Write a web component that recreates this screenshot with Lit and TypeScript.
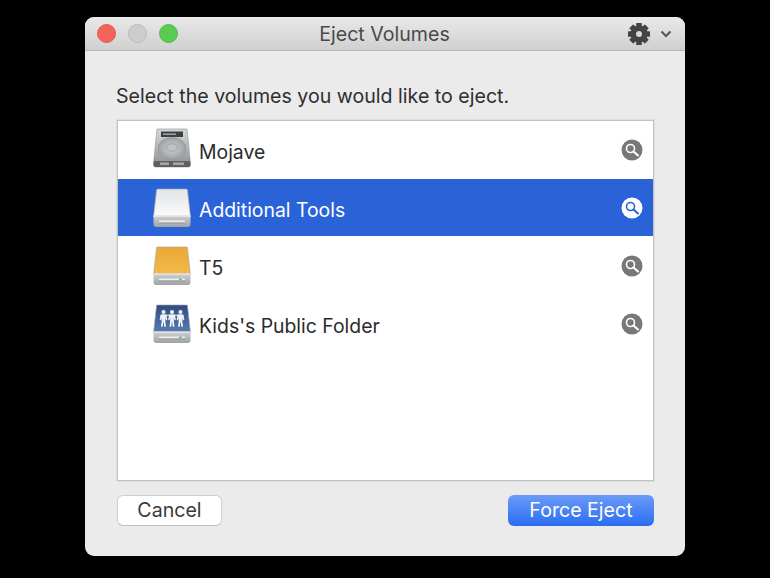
import { LitElement, html, css, svg } from "lit";
import { customElement } from "lit/decorators.js";

const defs = svg`<defs>
  <linearGradient id="hdd" x1="0" y1="0" x2="0" y2="1"><stop offset="0" stop-color="#d6d9da"/><stop offset=".55" stop-color="#aeb2b3"/><stop offset="1" stop-color="#8b8f91"/></linearGradient>
  <linearGradient id="body" x1="0" y1="0" x2="0" y2="1"><stop offset="0" stop-color="#cfd1d2"/><stop offset="1" stop-color="#a0a3a5"/></linearGradient>
  <linearGradient id="white" x1="0" y1="0" x2="0" y2="1"><stop offset="0" stop-color="#e2e4e6"/><stop offset="1" stop-color="#fbfbfc"/></linearGradient>
  <linearGradient id="orange" x1="0" y1="0" x2="0" y2="1"><stop offset="0" stop-color="#e9a835"/><stop offset="1" stop-color="#f2bb4c"/></linearGradient>
  <linearGradient id="blue" x1="0" y1="0" x2="0" y2="1"><stop offset="0" stop-color="#2f4b80"/><stop offset="1" stop-color="#5b7bb0"/></linearGradient>
  <radialGradient id="platter"><stop offset="0" stop-color="#cfd2d3"/><stop offset="1" stop-color="#9da1a3"/></radialGradient>
</defs>`;

const hdd = html`<svg class="disk hdd" viewBox="0 0 38 40">
  <path d="M4 1h30l3.500 35q0 3-2 3H2.500q-2 0-2-3z" fill="url(#hdd)" stroke="#8b8f91" stroke-width=".6"/>
  <rect x="8" y="3.500" width="22" height="5.500" fill="#3e4042"/>
  <rect x="10" y="5.500" width="13" height="1.400" fill="#a9adaf"/>
  <ellipse cx="19" cy="20.500" rx="14" ry="11" fill="url(#platter)" stroke="#8d9193" stroke-width=".5"/>
  <ellipse cx="19" cy="19.500" rx="5.500" ry="3.800" fill="#bfc2c3" stroke="#8a8e90" stroke-width=".6"/>
  <path d="M1 33h36l.5 3q0 3-2 3H2.500q-2 0-2-3z" fill="#5e6163"/>
  <rect x="7" y="34.500" width="9" height="2.500" fill="#a5a8aa"/>
  <rect x="20" y="34.500" width="11" height="2.500" fill="#a5a8aa"/>
</svg>`;

const external = (fill: string, extra: unknown = "") => html`<svg class="disk" viewBox="0 0 38 40">
  <path d="M4.500 1h29q1 0 1 1l3 27H.5l3-27q0-1 1-1z" fill="url(#${fill})" stroke="#a3a6a8" stroke-width=".6"/>
  ${extra}
  <path d="M.5 27.500h37V36q0 3-3 3H3.500q-3 0-3-3z" fill="url(#body)"/>
  <path d="M.5 27.500h37v1.200H.5z" fill="#e6e7e8"/>
  <rect x="6" y="32.500" width="26" height="2.200" rx="1" fill="#eef0f0"/>
  <rect x="6" y="34.500" width="26" height=".8" fill="#85888a"/>
  ${fill === "white" ? "" : svg`<rect x="26" y="32.500" width="3" height="2" fill="#7fb98a"/>`}
</svg>`;

const person = (x: number) => svg`<g fill="#f2f4f8">
  <circle cx="${x}" cy="8" r="2"/>
  <path d="M${x - 3} 10.500h6l.8 5.500-1.400.3-.6-3v3.500l.7 6h-1.700l-.8-5.500-.8 5.500h-1.700l.7-6v-3.500l-.6 3-1.400-.3z"/>
</g>`;
const people = svg`${person(10.500)}${person(19)}${person(27.500)}
  <rect x="9" y="10.700" width="20" height="1" fill="#f2f4f8"/>`;

const rows = [
  { name: "Mojave", icon: hdd },
  { name: "Additional Tools", icon: external("white"), selected: true },
  { name: "T5", icon: external("orange") },
  { name: "Kids's Public Folder", icon: external("blue", people) },
];

const gearTeeth = [0, 45, 90, 135];

@customElement("app-root")
export class AppRoot extends LitElement {
  static styles = css`
    :host { display: block; width: 770px; height: 578px; background: #000; overflow: hidden; padding: 17px 85px 22px; box-sizing: border-box; font-family: Inter, "Liberation Sans", sans-serif; }
    .window { height: 539px; width: 600px; background: #ebebeb; border-radius: 9px; display: flex; flex-direction: column; overflow: hidden; }
    .titlebar { height: 33px; flex: none; display: grid; grid-template-columns: 1fr auto 1fr; align-items: center; background: linear-gradient(#e9e9e9, #d0d0d0); border-bottom: 1px solid #b4b4b4; padding: 0 13px 0 12px; }
    .lights { display: flex; gap: 11.750px; }
    .light { width: 19px; height: 19px; border-radius: 50%; box-sizing: border-box; }
    .red { background: #f5645c; border: 1px solid #e4574f; }
    .gray { background: #cdcdcd; border: 1px solid #bbb; }
    .green { background: #5acb52; border: 1px solid #50bc49; }
    .title { font-size: 19.600px; color: #4a4a4a; padding-top: 1px; }
    .tools { display: flex; justify-content: flex-end; align-items: center; gap: 9px; }
    .gear { width: 24px; height: 24px; display: block; }
    .chev { width: 12px; height: 8px; display: block; }
    .content { flex: 1; display: flex; flex-direction: column; padding: 33px 31px 30px 32px; }
    .prompt { font-size: 19.600px; line-height: 24px; color: #2e2e2e; margin-bottom: 12px; margin-left: -1px; }
    .list { height: 361px; box-sizing: border-box; border: 1px solid #c2c2c2; box-shadow: 0 0 0 1px #dedede; background: #fff; margin-bottom: 14px; display: flex; flex-direction: column; }
    .row { height: 58px; flex: none; display: flex; align-items: center; padding-left: 35px; padding-right: 10px; color: #2b2b2b; font-size: 19.400px; }
    .row.sel { background: linear-gradient(#2a63d8, #2a63d8) no-repeat top / 100% 57px; color: #fff; }
    .disk { width: 38px; height: 40px; flex: none; margin-right: 8px; display: block; }
    .hdd { margin-top: -4px; }
    .name { flex: 1; padding-top: 3px; }
    .mag { width: 22px; height: 22px; display: block; }
    .actions { display: flex; justify-content: space-between; }
    button { font: inherit; font-size: 19.600px; height: 31px; padding: 1px 0 0; border-radius: 6px; line-height: 1; }
    .cancel { width: 105px; background: #fff; color: #3a3a3a; border: 1px solid #cfcfcf; border-bottom-color: #bdbdbd; }
    .force { width: 146px; background: linear-gradient(#6b9bf7, #2a6cf2); color: #fff; border: none; }
    .defs { position: absolute; width: 0; height: 0; }
  `;

  render() {
    return html`
      <svg class="defs">${defs}</svg>
      <div class="window">
        <div class="titlebar">
          <div class="lights"><span class="light red"></span><span class="light gray"></span><span class="light green"></span></div>
          <div class="title">Eject Volumes</div>
          <div class="tools">
            <svg class="gear" viewBox="0 0 24 24">
              <g fill="#444">
                ${gearTeeth.map((a) => svg`<rect x="9.200" y="1" width="5.600" height="22" rx=".6" transform="rotate(${a} 12 12)"/>`)}
                <circle cx="12" cy="12" r="8.500"/>
              </g>
              <circle cx="12" cy="12" r="3" fill="#d9d9d9"/>
            </svg>
            <svg class="chev" viewBox="0 0 12 8"><path d="M1.500 1.500 6 6l4.500-4.500" fill="none" stroke="#555" stroke-width="2"/></svg>
          </div>
        </div>
        <div class="content">
          <div class="prompt">Select the volumes you would like to eject.</div>
          <div class="list">
            ${rows.map((r) => html`
              <div class="row ${r.selected ? "sel" : ""}">
                ${r.icon}
                <span class="name">${r.name}</span>
                <svg class="mag" viewBox="0 0 22 22">
                  <circle cx="11" cy="11" r="10.500" fill="${r.selected ? "#fff" : "#787878"}"/>
                  <circle cx="9.500" cy="9.500" r="4" fill="none" stroke="${r.selected ? "#2a63d8" : "#fff"}" stroke-width="1.600"/>
                  <path d="M12.500 12.500 17 16.500" stroke="${r.selected ? "#2a63d8" : "#fff"}" stroke-width="2" stroke-linecap="round"/>
                </svg>
              </div>`)}
          </div>
          <div class="actions">
            <button class="cancel">Cancel</button>
            <button class="force">Force Eject</button>
          </div>
        </div>
      </div>
    `;
  }
}
